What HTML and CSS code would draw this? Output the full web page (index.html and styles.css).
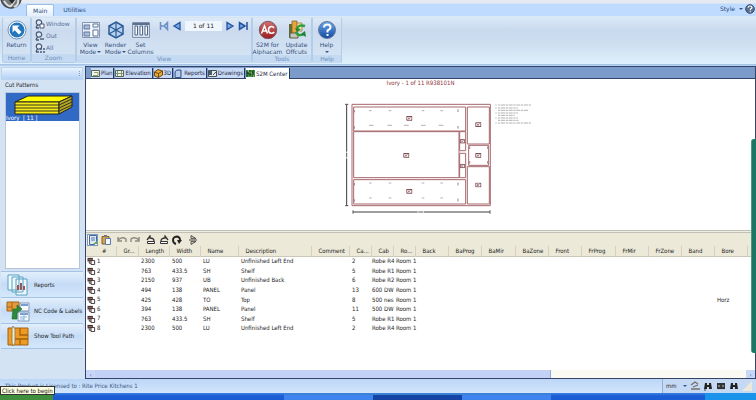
FILE: index.html
```
<!DOCTYPE html>
<html lang="en">
<head>
<meta charset="utf-8">
<title>S2M Center</title>
<link rel="stylesheet" href="styles.css">
</head>
<body>
<svg class="defs" width="0" height="0" aria-hidden="true">
  <defs>
    <linearGradient id="blueBall" x1="0" y1="0" x2="0" y2="1"><stop offset="0" stop-color="#6aa9ea"/><stop offset="1" stop-color="#12479e"/></linearGradient>
    <linearGradient id="redBall" x1="0" y1="0" x2="0" y2="1"><stop offset="0" stop-color="#d0706e"/><stop offset="1" stop-color="#9c1c20"/></linearGradient>
    <symbol id="lens" viewBox="0 0 10 10"><circle cx="4" cy="3.5" r="2.7" fill="#dfe9f7" stroke="#4a5878" stroke-width="1.2"/><path d="M2.5 5.5L1 9M1 9h3" stroke="#4a5878" stroke-width="1.3" fill="none"/></symbol>
    <symbol id="part" viewBox="0 0 9 9"><path d="M0 1h6v4H0z" fill="#4b3430"/><path d="M1 3h4" stroke="#a88" stroke-width=".8"/><path d="M4 4h4v4.5H4z" fill="#fff" stroke="#33282c"/><path d="M2 5v2h2" stroke="#33282c" fill="none"/></symbol>
    <symbol id="mark" viewBox="0 0 18 14"><path d="M1 1h16v12H1z" fill="#fff" stroke="#6d3038" stroke-width="3"/><path d="M4 10l9-6M5 4l5 6" stroke="#85484e" stroke-width="2"/></symbol>
  </defs>
</svg>
<div class="app">
  <header class="top">
    <svg class="orb" width="24" height="10" viewBox="0 0 24 10"><circle cx="11" cy="-2" r="10" fill="#777a7c" stroke="#44484c" stroke-width="1.5"/><path d="M4 1q4 6 7 5l4-6M14 7q5-2 4-7" fill="none" stroke="#dcdcd8" stroke-width="2"/><path d="M9 0l3 4 3-4" fill="#26292c"/></svg>
    <nav class="tabs">
      <button class="tab active">Main</button>
      <button class="tab">Utilities</button>
    </nav>
    <div class="style-box"><button class="flat">Style <span class="caret"></span></button>
      <button class="flat" aria-label="Help"><svg width="10" height="10" viewBox="0 0 10 10"><circle cx="5" cy="5" r="4.3" fill="#577090" stroke="#3a4c68"/><path d="M3 3.7q.3-1.7 2-1.7 2 0 2 1.5 0 1-1.6 1.7v1M5.4 7.2v1" stroke="#fff" stroke-width="1.2" fill="none"/></svg></button></div>
  </header>

  <section class="ribbon">
    <div class="group home">
      <div class="items"><button class="big">
        <svg width="20" height="20" viewBox="0 0 20 20"><circle cx="10" cy="10" r="9" fill="#fff" stroke="#6f94bd"/><circle cx="10" cy="10" r="7.5" fill="#2577bd"/><path d="M5.5 5.5h7l-2.2 2.2 4.2 4.2-2.6 2.6-4.2-4.2-2.2 2.2z" fill="#fff"/></svg>
        <span>Return</span></button></div>
      <h2>Home</h2>
    </div>
    <div class="group zoom">
      <div class="items stack">
        <button class="small"><svg width="10" height="10"><use href="#lens"/><path d="M5 5h4v4H5z" fill="#fff" stroke="#4a5878"/></svg>Window</button>
        <button class="small"><svg width="10" height="10"><use href="#lens"/><path d="M5 8h4" stroke="#4a5878" stroke-width="1.4"/></svg>Out</button>
        <button class="small"><svg width="10" height="10"><use href="#lens"/><path d="M5 6h2M8 6h2M5 9h2M8 9h2" stroke="#4a5878" stroke-width="1.6"/></svg>All</button>
      </div>
      <h2>Zoom</h2>
    </div>
    <div class="group view">
      <div class="items">
        <button class="big">
          <svg width="20" height="20" viewBox="0 0 20 20"><path d="M1.500 2.500h17v15h-17z" fill="#e6eef9" stroke="#8797b2"/><path d="M3 5h6v4H3zM3 12h6v4H3z" fill="#a9bcd8" stroke="#63789c"/><path d="M12 4h5v3h-5zM12 10h5v6h-5z" fill="#f8fbff" stroke="#63789c"/><path d="M10 3v14" stroke="#fff" stroke-width="1.500"/></svg>
          <span>View<br>Mode<i class="caret"></i></span></button>
        <button class="big">
          <svg width="20" height="20" viewBox="0 0 20 20"><path d="M10 2l7 4v8l-7 4-7-4V6z" fill="#b9d3ee" stroke="#2a5b95" stroke-width="1.500"/><path d="M3 6l7 4 7-4M10 10v8M10 2v8M3 14l7-4 7 4" fill="none" stroke="#2a5b95" stroke-width="1.200"/></svg>
          <span>Render<br>Mode<i class="caret"></i></span></button>
        <button class="big">
          <svg width="20" height="20" viewBox="0 0 20 20"><path d="M1.500 2.500h17v15h-17z" fill="#d5e1ef" stroke="#8292aa"/><path d="M2 3h16v2H2z" fill="#59708f"/><path d="M4 6h2.500v9H4zM9 6h2.500v9H9zM14 6h2.500v9H14z" fill="#fff" stroke="#526886"/></svg>
          <span>Set<br>Columns</span></button>
        <div class="pager">
          <button class="flat" aria-label="First"><svg width="10" height="10" viewBox="0 0 10 10"><path d="M1.500 1v8M5 5l3.500-3.500v7zM2 5h3" stroke="#6b8fc4" fill="#b9d0ee" stroke-width="1.500"/></svg></button>
          <button class="flat" aria-label="Previous"><svg width="10" height="10" viewBox="0 0 10 10"><path d="M2 5l6-3.500v7z" stroke="#2353a0" fill="#79a8e4" stroke-width="1.300"/></svg></button>
          <input value="1 of 11" aria-label="Page">
          <button class="flat" aria-label="Next"><svg width="10" height="10" viewBox="0 0 10 10"><path d="M8 5L2 1.500v7z" stroke="#2353a0" fill="#79a8e4" stroke-width="1.300"/></svg></button>
          <button class="flat" aria-label="Last"><svg width="10" height="10" viewBox="0 0 10 10"><path d="M9 1v8M7 5L1.500 1.500v7z" stroke="#2353a0" fill="#79a8e4" stroke-width="1.500"/></svg></button>
        </div>
      </div>
      <h2>View</h2>
    </div>
    <div class="group tools">
      <div class="items">
        <button class="big">
          <svg width="20" height="20" viewBox="0 0 20 20"><circle cx="10" cy="10" r="8.700" fill="url(#redBall)" stroke="#7d5a66"/><path d="M3.500 13.500L6.500 6l3 7.500M4.500 11h4M16 8q-1-1.700-2.800-1.500-2.700.5-2.700 3.500t2.700 3.300q2 .2 3-1.500" fill="none" stroke="#fff" stroke-width="1.500"/></svg>
          <span>S2M for<br>Alphacam</span></button>
        <button class="big">
          <svg width="20" height="20" viewBox="0 0 20 20"><path d="M2 4h5v14H2z" fill="#5c6c34"/><path d="M5 1h5v13H5z" fill="#e8a33c" stroke="#8c6428" stroke-width=".8"/><path d="M10 3h5v8h-5z" fill="#f5dda0" stroke="#94813c" stroke-width=".8"/><path d="M3 13h8v5H3z" fill="#c7c4b8" stroke="#595f4b"/><path d="M18 6q-7-2-8 3M9 12q2 5 8 2" stroke="#2c9d3c" stroke-width="2.400" fill="none"/><path d="M8 8l6 1-4 3zM19 17l-1-6-4 3z" fill="#1c8430"/></svg>
          <span>Update<br>Offcuts</span></button>
      </div>
      <h2>Tools</h2>
    </div>
    <div class="group help">
      <div class="items"><button class="big">
        <svg width="20" height="20" viewBox="0 0 20 20"><circle cx="10" cy="10" r="8.500" fill="url(#blueBall)" stroke="#64789c"/><path d="M7 7.500q0-3 3.200-3 3.300 0 3.300 2.700 0 1.800-3 3.200v2M10.500 14v2" stroke="#fff" stroke-width="2" fill="none"/></svg>
        <span>Help<br><i class="caret"></i></span></button></div>
      <h2>Help</h2>
    </div>
  </section>

  <main class="work">
    <aside class="side">
      <div class="grip"><span></span></div>
      <h3>Cut Patterns</h3>
      <div class="list">
        <button class="pattern">
          <svg width="60" height="20" viewBox="0 0 60 20"><path d="M1 7L14 1h44L45 7z" fill="#ff0" stroke="#222"/><path d="M1 7h44v12H1z" fill="#f3ea18" stroke="#222"/><path d="M45 7L58 1v11l-13 7z" fill="#b5a820" stroke="#222"/><path d="M1 10h44l13-6M1 13h44l13-6M1 16h44l13-6" fill="none" stroke="#222" stroke-width=".9"/></svg>
          <span>Ivory&nbsp; [ 11 ]</span>
        </button>
      </div>
      <div class="actions">
        <button><svg width="24" height="22" viewBox="0 0 24 22"><path d="M2 1h11v15H2zM6 3h11v15H6zM10 5h11v16H10z" fill="#eef8fd" stroke="#57a2c0"/><path d="M12 11v5M15 9v7M18 12v4" stroke="#b54d42" stroke-width="2"/><path d="M15 10v6" stroke="#3979af"/></svg>Reports</button>
        <button><svg width="24" height="22" viewBox="0 0 24 22"><path d="M1 2h12v9H1z" fill="#e59b38" stroke="#a4641d"/><path d="M1 7h5V2M6 7v4" fill="none" stroke="#a4641d"/><path d="M14 3h9v8h-9zM12 12h11v9H12z" fill="#f4f9fd" stroke="#8396b8"/><path d="M15 5h7M14 14h8" stroke="#4c81c0" stroke-width="1.500"/><path d="M14 17h7M14 19h4M18 12v9" stroke="#8db3dd"/><path d="M7 9h4V5l5 4-5 4v6H6z" fill="#2c8b3a" stroke="#176426" stroke-width=".6"/></svg>NC Code &amp; Labels</button>
        <button><svg width="24" height="22" viewBox="0 0 24 22"><path d="M2 3h20v17H2z" fill="#ee9b25" stroke="#a5620f"/><path d="M14 3v7h8M8 14h14M14 14v6" fill="none" stroke="#a5620f" stroke-width="1.300"/><path d="M7 1l2 3v14l-2 3-1-3V3z" fill="#ece6cd" stroke="#87734c" stroke-width=".8"/></svg>Show Tool Path</button>
      </div>
    </aside>

    <section class="doc">
      <nav class="doctabs">
        <button><svg width="9" height="9" viewBox="0 0 9 9"><path d="M.5 1.500h8v6h-8z" fill="#f2f4e6" stroke="#526754"/><path d="M3 3.500h4v3H2" fill="none" stroke="#8ba07e"/></svg>Plan</button>
        <button><svg width="9" height="9" viewBox="0 0 9 9"><path d="M.5 1.500h8v6h-8z" fill="#eef0e2" stroke="#526754"/><path d="M2.500 2v5M6.500 2v5M1 4.500h7" stroke="#7e947c"/></svg>Elevation</button>
        <button><svg width="9" height="9" viewBox="0 0 9 9"><path d="M.5 3L4 .5 8.500 2v4L4.500 8.500.5 7z" fill="#e7ac30" stroke="#6c4716"/><path d="M.5 3l4 1.500 4-2.500M4.500 4.500v4" stroke="#6c4716" fill="none"/></svg>3D</button>
        <button><svg width="9" height="9" viewBox="0 0 9 9"><path d="M1 2.500L3 1h4v7.500H1z" fill="#8fb1df" stroke="#36588f"/><path d="M3 2v6M5 2v6" stroke="#fff" stroke-width=".7"/></svg>Reports</button>
        <button><svg width="9" height="9" viewBox="0 0 9 9"><path d="M.5 1.500h8v6h-8z" fill="#e8ece8" stroke="#43515b"/><path d="M1 2h3v4H1z" fill="#4c5c70"/><path d="M5 6l3-3" stroke="#43515b"/></svg>Drawings</button>
        <button class="active"><svg width="9" height="9" viewBox="0 0 9 9"><path d="M0 1h9v7H0z" fill="#3e9a45"/><path d="M1 8V3l3 3 3-4v6M4 1v2" stroke="#263f2b" stroke-width="1.200" fill="none"/><path d="M2 2h1M5 4h1M7 7h1" stroke="#e5d8a0"/></svg>S2M Center</button>
      </nav>
      <div class="canvas">
        <h1>Ivory - 1 of 11 R938101N</h1>
        <svg class="drawing" width="224" height="118" viewBox="-63 24 672 354">
          <g fill="none" stroke="#a7686c" stroke-width="3">
            <path d="M66 43h415v304H66zM71 51h336v72H71zM71 125h316v138H71zM71 269h336v73H71zM389 125h18v57h-18zM389 190h18v73h-18zM412 51h66v111h-66zM416 166h60v60h-60zM412 230h66v112h-66z"/>
          </g>
          <g stroke="#9c8288" stroke-width="2" fill="none">
            <path d="M117 62h8M176 62h8M275 62h8M331 62h8M117 106h14M172 106h14M222 106h14M273 106h14M326 106h14M117 279h8M176 279h8M275 279h8M331 279h8M117 324h8M176 324h8M275 324h8M331 324h8"/>
            <path d="M73 60v7M73 109v7M384 58v8M384 108v8M73 279v7M73 328v7M384 278v8M384 326v8M419 169v8M473 169v8M419 213v8M473 213v8" stroke-width="3"/>
          </g>
          <g><use href="#mark" x="229" y="78" width="18" height="14"/><use href="#mark" x="220" y="189" width="18" height="14"/><use href="#mark" x="229" y="297" width="18" height="14"/><use href="#mark" x="390" y="147" width="15" height="14"/><use href="#mark" x="390" y="221" width="15" height="14"/><use href="#mark" x="436" y="97" width="18" height="14"/><use href="#mark" x="436" y="189" width="18" height="14"/><use href="#mark" x="436" y="278" width="18" height="14"/></g>
          <path d="M50 43v142M50 205v142M69 366h194M281 366h199" stroke="#3c3c40" stroke-width="3"/>
          <path d="M45 43h10M45 347h10M69 361v10M480 361v10M50 188v14M265 366h14" stroke="#55555a" stroke-width="3"/>
          <path d="M496 45h4M504 45h100M496 54h4M504 54h60M504 61h90M496 69h4M504 69h60M504 76h50M496 84h4M504 84h60M504 91h62M496 99h4M504 99h100" stroke="#8d8d92" stroke-width="2" stroke-dasharray="7 2 12 2"/>
        </svg>
      </div>
      <div class="splitter"></div>
      <div class="toolbar">
        <button class="on" aria-label="List"><svg width="10" height="10" viewBox="0 0 10 10"><path d="M1.500.5h7v7l-2 2h-5z" fill="#dce8f6" stroke="#476999"/><path d="M3 3h4M3 5h4" stroke="#527bb0"/><path d="M5 9l4-3v3z" fill="#6aa648"/></svg></button>
        <button aria-label="Paste"><svg width="10" height="10" viewBox="0 0 10 10"><path d="M1 1.500h7V9H1z" fill="#d8a446" stroke="#85602a"/><path d="M3 0h3v2H3z" fill="#6f7887"/><path d="M4.500 3.500h5v6h-5z" fill="#f5f9ff" stroke="#5879ab"/></svg></button>
        <i></i>
        <button aria-label="Undo"><svg width="10" height="10" viewBox="0 0 10 10"><path d="M1 2v4h4M1 5q4-4 8-1v3" fill="none" stroke="#8b897f" stroke-width="1.400"/></svg></button>
        <button aria-label="Redo"><svg width="10" height="10" viewBox="0 0 10 10"><path d="M9 2v4H5M9 5Q5 1 1 4v3" fill="none" stroke="#8b897f" stroke-width="1.400"/></svg></button>
        <i></i>
        <button aria-label="Rotate left"><svg width="10" height="10" viewBox="0 0 10 10"><path d="M1 5l3-4v2q4 0 4 3" fill="none" stroke="#333" stroke-width="1.300"/><path d="M1.500 6.500h7v2h-7z" fill="#fff" stroke="#333"/></svg></button>
        <button aria-label="Rotate right"><svg width="10" height="10" viewBox="0 0 10 10"><path d="M9 5L6 1v2Q2 3 2 6" fill="none" stroke="#333" stroke-width="1.300"/><path d="M1.500 6.500h7v2h-7z" fill="#fff" stroke="#333"/></svg></button>
        <button aria-label="Rotate"><svg width="10" height="10" viewBox="0 0 10 10"><path d="M4 9Q1 8 1 5t4-3.500Q8 2 8 5" fill="none" stroke="#222" stroke-width="1.900"/><path d="M5 5h5L7 9z" fill="#222"/></svg></button>
        <i></i>
        <button aria-label="Flip"><svg width="10" height="10" viewBox="0 0 10 10"><path d="M3 .5l5 3H3zM3 9.500l5-3H3z" fill="#c8c5b8" stroke="#55534d" stroke-width=".9"/><path d="M1 5h8" stroke="#444"/></svg></button>
      </div>
      <div class="grid">
        <table>
          <colgroup><col class="c30"><col class="c22"><col class="c31"><col class="c31"><col class="c38"><col class="c73"><col class="c38"><col class="c22"><col class="c22"><col class="c22"><col class="c33"><col class="c33"><col class="c34"><col class="c33"><col class="c33"><col class="c34"><col class="c33"><col class="c33"><col class="c33"><col class="c33"><col></colgroup>
          <thead><tr><th class="num">#</th><th>Gr...</th><th>Length</th><th>Width</th><th>Name</th><th>Description</th><th>Comment</th><th>Ca...</th><th>Cab</th><th>Ro...</th><th>Back</th><th>BaProg</th><th>BaMir</th><th>BaZone</th><th>Front</th><th>FrProg</th><th>FrMir</th><th>FrZone</th><th>Band</th><th>Bore</th><th></th></tr></thead>
          <tbody>
            <tr><td><svg width="9" height="9"><use href="#part"/></svg>1</td><td></td><td>2300</td><td>500</td><td>LU</td><td>Unfinished Left End</td><td></td><td>2</td><td class="cab">Robe R4</td><td>Room 1</td><td colspan="11"></td></tr>
            <tr><td><svg width="9" height="9"><use href="#part"/></svg>2</td><td></td><td>763</td><td>433.5</td><td>SH</td><td>Shelf</td><td></td><td>5</td><td class="cab">Robe R1</td><td>Room 1</td><td colspan="11"></td></tr>
            <tr><td><svg width="9" height="9"><use href="#part"/></svg>3</td><td></td><td>2150</td><td>937</td><td>UB</td><td>Unfinished Back</td><td></td><td>6</td><td class="cab">Robe R2</td><td>Room 1</td><td colspan="11"></td></tr>
            <tr><td><svg width="9" height="9"><use href="#part"/></svg>4</td><td></td><td>494</td><td>138</td><td>PANEL</td><td>Panel</td><td></td><td>13</td><td class="cab">600 DW</td><td>Room 1</td><td colspan="11"></td></tr>
            <tr><td><svg width="9" height="9"><use href="#part"/></svg>5</td><td></td><td>425</td><td>428</td><td>TO</td><td>Top</td><td></td><td>8</td><td class="cab">500 nes</td><td>Room 1</td><td colspan="9"></td><td>Horz</td><td></td></tr>
            <tr><td><svg width="9" height="9"><use href="#part"/></svg>6</td><td></td><td>394</td><td>138</td><td>PANEL</td><td>Panel</td><td></td><td>11</td><td class="cab">500 DW</td><td>Room 1</td><td colspan="11"></td></tr>
            <tr><td><svg width="9" height="9"><use href="#part"/></svg>7</td><td></td><td>763</td><td>433.5</td><td>SH</td><td>Shelf</td><td></td><td>5</td><td class="cab">Robe R1</td><td>Room 1</td><td colspan="11"></td></tr>
            <tr><td><svg width="9" height="9"><use href="#part"/></svg>8</td><td></td><td>2300</td><td>500</td><td>LU</td><td>Unfinished Left End</td><td></td><td>2</td><td class="cab">Robe R4</td><td>Room 1</td><td colspan="11"></td></tr>
          </tbody>
        </table>
      </div>
      <div class="scroll"><button aria-label="Scroll left">‹</button><div class="track"><div class="thumb"></div></div><button aria-label="Scroll right">›</button></div>
    </section>
  </main>

  <footer class="status">
    <p>This Product is Licensed to : Rite Price Kitchens 1</p>
    <div class="units">
      <select aria-label="Units"><option>mm</option></select><span class="caret"></span>
      <button aria-label="Snap"><svg width="10" height="10" viewBox="0 0 10 10"><path d="M1 4l4-3 3 2M1 8h9M3 6l5-2" stroke="#77706a" fill="none" stroke-width="1.300"/></svg></button>
      <button aria-label="Find"><svg width="10" height="10" viewBox="0 0 10 10"><path d="M2 2h2v2h2V2h2l1 6H6V6H4v2H1z" fill="#222"/><path d="M1 9h2" stroke="#444"/></svg></button>
      <button aria-label="Find all"><svg width="10" height="10" viewBox="0 0 10 10"><path d="M1 2h8v6H1z" fill="#333"/><path d="M2 5h2M6 5h2M2 8.500h7" stroke="#b9c5da"/></svg></button>
      <button aria-label="Find next"><svg width="10" height="10" viewBox="0 0 10 10"><path d="M2 2h2v2h2V2h2l1 6H6V6H4v2H1z" fill="#222"/></svg></button>
      <svg width="10" height="10" viewBox="0 0 10 10"><path d="M0 10L10 0v10z" fill="#ece9dc"/></svg>
    </div>
  </footer>
  <div class="taskbar"><button class="start" aria-label="Start"></button><span class="gap"></span><span class="task"></span><span class="task pressed"></span><span class="task"></span><span class="rest"></span><span class="tray"></span></div>
  <div class="tip" role="tooltip">Click here to begin</div>
  <div class="edge"></div>
</div>
</body>
</html>
```
FILE: styles.css
```
* { box-sizing: border-box; }
html, body { height: 100%; margin: 0; }
body { font: 6px/8px "DejaVu Sans Condensed", "DejaVu Sans", sans-serif; color: #222; overflow: hidden; }
button, input, select { font: inherit; color: inherit; margin: 0; padding: 0; border: 0; background: none; }
h1, h2, h3, p { margin: 0; font: inherit; }
svg { display: block; flex: none; }
.defs { position: absolute; }
.app { position: relative; display: flex; flex-direction: column; height: 100vh; background: #bfdbff; }

.top { display: flex; align-items: flex-end; height: 16px; background: linear-gradient(#e6ebf2 0 3px, #bfdbff 4px 100%); font-family: "DejaVu Sans", sans-serif; color: #28497c; }
.orb { align-self: flex-start; }
.tabs { display: flex; flex: 1; padding-left: 2px; }
.tab { height: 12px; padding: 0 6px; color: #28497c; }
.tab.active { padding: 0 6px; margin-right: 3px; background: linear-gradient(#fff, #e4effb); border: 1px solid #9abde8; border-bottom: 0; border-radius: 2px 2px 0 0; }
.style-box { display: flex; align-items: center; height: 14px; gap: 2px; padding-right: 1px; }
.flat { display: flex; align-items: center; gap: 4px; }
.caret { display: inline-block; border: solid transparent; border-top-color: #31558c; border-width: 2px 2px 0; vertical-align: middle; }

.ribbon { display: flex; height: 49px; padding: 1px 2px; background: linear-gradient(#dceaf8, #c9d9ee 30%, #cfdff1 60%, #def0fb); border-bottom: 1px solid #a5c4e8; font-family: "DejaVu Sans", sans-serif; color: #33527f; }
.group { display: flex; flex-direction: column; border: 1px solid #b3cde8; border-top-color: #d4e4f4; border-radius: 2px; background: linear-gradient(#dce9f7, #cbdaee 30%, #d7e6f5); }
.group h2 { height: 8px; text-align: center; color: #6f8fbc; background: #c3daf2; }
.items { display: flex; flex: 1; padding-top: 2px; }
.home { width: 29px; }
.zoom { width: 45px; }
.view { width: 176px; }
.tools { width: 60px; }
.help { width: 30px; }
.big { display: flex; flex-direction: column; align-items: center; flex: none; width: 27px; }
.big span { line-height: 7px; padding-top: 1px; }
.big .caret { margin-left: 1px; }
.tools .items { justify-content: space-around; }
.tools .big { width: 28px; }
.view .items { padding-left: 1px; }
.view .big { width: 25px; }
.stack { flex-direction: column; padding: 0 3px; }
.small { display: flex; align-items: center; gap: 1px; height: 12px; color: #57719a; }
.pager { display: flex; align-items: center; gap: 3px; height: 11px; margin-left: 5px; padding-left: 1px; }
.pager input { width: 37px; height: 10px; background: #f0f6fd; text-align: center; color: #222; }

.work { display: flex; flex: 1; min-height: 0; border-top: 1px solid #b7d0ee; }
.side { display: flex; flex-direction: column; width: 85px; padding: 1px 2px 0 1px; background: #d4e3f4; }
.grip { display: flex; justify-content: flex-end; height: 13px; padding: 3px 2px; background: linear-gradient(#e8f3ff, #b5d1f5); border: 1px solid #bdd4ef; }
.grip span { border-left: 1px dotted #7c9fd0; }
.side h3 { padding: 1px 4px 3px; }
.list { flex: 1; margin: 0 3px 2px 4px; background: #fff; border: 1px solid #b5c6dc; }
.pattern { display: block; width: 100%; height: 28px; padding: 1px 0 0 8px; background: #316ac5; color: #fff; text-align: left; }
.pattern span { display: block; line-height: 6px; margin-left: -8px; }
.actions { padding-bottom: 30px; }
.actions button { display: flex; align-items: center; gap: 4px; width: 100%; height: 26px; padding-left: 5px; white-space: nowrap; background: linear-gradient(#e2effc, #c6dcf6 50%, #d4e8fb); border: 1px solid #a6c3e6; border-width: 1px 0 0; }
.actions button:last-child { border-bottom-width: 1px; }

.doc { display: flex; flex-direction: column; flex: 1; min-width: 0; border: 1px solid #35456a; background: #fff; }
.doctabs { display: flex; gap: 1px; height: 12px; padding: 1px 5px 0; background: #7b9bca; border-bottom: 1px solid #35456a; }
.doctabs button { display: flex; align-items: center; gap: 1px; height: 10px; padding-right: 1px; background: #c7d9f4; border-right: 1px solid #26365a; color: #1c2644; }
.doctabs .active { height: 11px; background: #fff; }
.canvas { display: flex; flex-direction: column; align-items: center; height: 151px; }
.canvas h1 { font-size: 6px; line-height: 8px; color: #8c3238; }
.drawing { margin-top: 11px; }
.splitter { height: 3px; background: #efeee6; border: 1px solid #c1c0b6; border-width: 1px 0; }
.toolbar { display: flex; align-items: center; gap: 2px; height: 13px; padding-left: 1px; background: #ece9d8; }
.toolbar button { width: 11px; height: 12px; display: grid; place-items: center; }
.toolbar .on { background: #fbfaf4; border: 1px solid #7a98c4; }
.toolbar i { width: 1px; }
.grid { flex: 1; min-height: 0; overflow: hidden; }
table { table-layout: fixed; border-collapse: collapse; width: 100%; height: 87px; }
thead tr { height: 10px; background: #ece9d8; border-bottom: 1px solid #cbc7b8; }
th { padding: 0 0 0 7px; font-weight: normal; text-align: left; white-space: nowrap; border-right: 1px solid #d5d1c0; }
.num { text-align: center; }
td { padding: 0 0 0 3px; white-space: nowrap; line-height: 8px; }
td:first-child { padding-left: 1px; }
td.cab { padding-left: 1px; }
td svg { display: inline-block; vertical-align: middle; margin-right: 1px; height: 8px; }
.c22 { width: 22px; }
.c30 { width: 30px; }
.c31 { width: 31px; }
.c33 { width: 33px; }
.c34 { width: 34px; }
.c38 { width: 38px; }
.c73 { width: 73px; }
.scroll { display: flex; height: 8px; background: #fbfaf2; }
.scroll button { width: 9px; line-height: 7px; background: #c8d6f8; color: #31558c; }
.track { flex: 1; }
.thumb { width: 70%; height: 100%; background: #c4d1f6; border-right: 1px solid #91a9dd; }

.status { display: flex; justify-content: space-between; height: 14px; padding-left: 5px; background: linear-gradient(#bcd6f6, #d2e6fb); color: #3a5685; }
.status p { line-height: 14px; }
.units { display: flex; align-items: center; gap: 3px; padding: 0 4px 0 3px; border-left: 1px solid #8fb0dc; background: #c5d9f4; }
.units select { appearance: none; width: 14px; color: #222; }
.taskbar { display: flex; height: 7px; background: linear-gradient(#3c81e4, #1c5cd4 3px); }
.start { width: 53px; background: #3f8f3c; }
.gap { width: 231px; }
.task { width: 89px; background: #3e83ee; border-top: 2px solid #3c81d4; }
.pressed { background: #1444a4; }
.rest { flex: 1; }
.tray { width: 51px; background: #1a93ea; }
.tip { position: absolute; left: 0; bottom: 5px; padding: 0 1px; background: #ffffe1; border: 1px solid #333; color: #111; line-height: 7px; white-space: nowrap; }
.edge { position: absolute; right: 0; top: 139px; width: 5px; height: 214px; background: #1c7664; border-left: 1px solid #4c9686; border-radius: 3px 0 0 3px; }
```
